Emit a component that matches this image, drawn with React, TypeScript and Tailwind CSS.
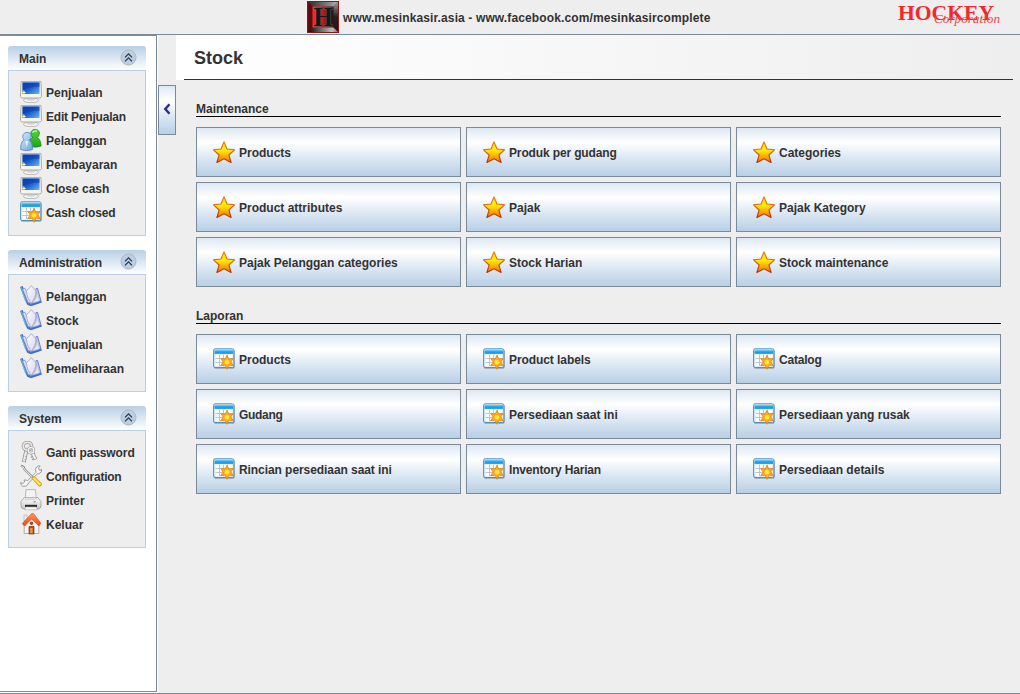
import type { ReactNode } from "react";

function MonitorIcon() {
  return (
    <svg width="22" height="22" viewBox="0 0 22 22">
      <defs>
        <linearGradient id="screen" x1="0" y1="0" x2="1" y2="1">
          <stop offset="0" stopColor="#0a3fae" />
          <stop offset=".45" stopColor="#1459cc" />
          <stop offset="1" stopColor="#6db4f5" />
        </linearGradient>
      </defs>
      <ellipse cx="11" cy="19.300" rx="7.600" ry="2.300" fill="#f6f6f6" stroke="#a9a9a9" strokeWidth=".8" />
      <path d="M7.500 16h7l1 3q-4.500 1.500-9 0z" fill="#d2d2d2" />
      <path d="M1 .6h20l.5 15-1.200 1.400H1.700L.5 15.600z" fill="#f4f4ee" stroke="#a3a69b" strokeWidth=".9" />
      <path d="M2.500 1.500h17V13h-17z" fill="url(#screen)" />
      <path d="M2.500 1.500h17V6q-9-1-17 3.500z" fill="#0a3ba4" opacity=".45" />
      <path d="m3.800 8.800.7 1.800 1.900.6-1.700.9-.5 1.900-1-1.700-1.700-.6 1.700-1z" fill="#fff0a0" />
    </svg>
  );
}

function UsersIcon() {
  return (
    <svg width="22" height="22" viewBox="0 0 22 22">
      <defs>
        <linearGradient id="userGreen" x2="0" y2="1">
          <stop offset="0" stopColor="#55d93b" />
          <stop offset="1" stopColor="#1da31a" />
        </linearGradient>
        <linearGradient id="userBlue" x2="1" y2="1">
          <stop offset="0" stopColor="#d7ecff" />
          <stop offset="1" stopColor="#6ba4dc" />
        </linearGradient>
      </defs>
      <path d="M9.500 17q-.5-7 3-8.500Q9.800 6 11 2.800 12.500 0 15.700.4q4 .8 3.700 4.300-.3 2.500-2.200 3.800 3.500 1.600 3.900 8.500-5.500 2.400-11.600 0z" fill="url(#userGreen)" stroke="#118016" strokeWidth=".7" />
      <path d="M12.500 3.500q1.500-2.400 4.400-1.200" stroke="#bdf5a9" strokeWidth="1.500" fill="none" />
      <path d="M.7 20.500q-.3-8 3.500-9.500Q1.700 8.500 3 5.700q1.700-2.900 5-2.300 3.600.8 3.100 4.400-.3 2-2.100 3.400 3.600 1.600 3.600 9.300-6 2.400-11.900 0z" fill="url(#userBlue)" stroke="#4b87c4" strokeWidth=".8" />
      <path d="m5.200 12 1.600 6.500 1.400-6.500z" fill="#fff" opacity=".75" />
    </svg>
  );
}

function TableIcon() {
  return (
    <svg width="22" height="22" viewBox="0 0 22 22">
      <defs>
        <linearGradient id="tableHead" x2="0" y2="1">
          <stop offset="0" stopColor="#7cd0f7" />
          <stop offset=".5" stopColor="#169be8" />
          <stop offset="1" stopColor="#2ea8ee" />
        </linearGradient>
      </defs>
      <rect x=".9" y="1.800" width="20.600" height="18.700" rx="1.500" fill="#75808a" />
      <rect x=".6" y=".8" width="20.300" height="18.700" rx="1.500" fill="#dcecf7" stroke="#4d93c2" />
      <path d="M1.500 2h18.600v4H1.500z" fill="url(#tableHead)" />
      <path d="M2.500 6.600h16.700v11.600H2.500z" fill="#fff" />
      <path d="M6.500 6.600v11.600M10.500 6.600v11.600M14.500 6.600v11.600M2.500 10.500h16.700M2.500 14.500h16.700" stroke="#b9bec4" strokeWidth=".9" />
      <path d="m14 7.300 1.800 3.800 4.300-.6-2.400 3.600 2.800 3.600-4.700-.6L14 21.300l-1.900-4.200-4.500.6 2.700-3.600-2.500-3.600 4.400.6z" fill="#ffad1d" stroke="#e8831b" strokeWidth=".9" />
      <circle cx="14" cy="14.200" r="2.300" fill="#ffe932" />
    </svg>
  );
}

function BookIcon() {
  return (
    <svg width="22" height="22" viewBox="0 0 22 22">
      <defs>
        <linearGradient id="page" x2="1" y2="1">
          <stop offset="0" stopColor="#fff" />
          <stop offset="1" stopColor="#d3d4ec" />
        </linearGradient>
      </defs>
      <path d="M.7 2 2.500 1.500 8 17l3 1.700 9.800-2.700.7 1.200-10.300 3.500-3.700-1.200z" fill="#3a7ed5" stroke="#2458b5" strokeWidth=".7" />
      <path d="M1 2.200 6 17" stroke="#4ab9f3" strokeWidth="1.500" strokeDasharray="2 1" />
      <path d="M2.600 4 5 3.200l6 15.300-3-1.200z" fill="#dedff0" stroke="#8b91be" strokeWidth=".7" />
      <path d="m16 3.700 1.500-.3L21 16l-9.800 3z" fill="#bdc9eb" stroke="#4a6dc2" strokeWidth=".8" />
      <path d="M11 18.600Q6.500 12 6.300 5.500q3-1.500 5-4.900Q13.500 3.600 16 5.400q0 8-5 13.200z" fill="url(#page)" stroke="#a0a2c8" strokeWidth=".8" />
      <path d="M17 5.500q.7 7-4.500 12.500l7-2z" fill="#e3e4f3" stroke="#a6a9cf" strokeWidth=".5" />
    </svg>
  );
}

function StarIcon() {
  return (
    <svg width="22" height="22" viewBox="0 0 22 22">
      <defs>
        <linearGradient id="starFill" x2="0" y2="1">
          <stop offset="0" stopColor="#ffd51a" />
          <stop offset=".4" stopColor="#fff000" />
          <stop offset="1" stopColor="#f36a08" />
        </linearGradient>
        <linearGradient id="starEdge" x2="0" y2="1">
          <stop offset="0" stopColor="#e9871e" />
          <stop offset="1" stopColor="#bd3005" />
        </linearGradient>
      </defs>
      <path d="m11 .7 3 7.300 7.500.8-5.600 5.200 2.200 7.500-7.100-3.700-7.100 3.700L6.100 14 .5 8.800 8 8z" fill="url(#starFill)" stroke="url(#starEdge)" strokeWidth="1.100" strokeLinejoin="round" />
    </svg>
  );
}

function KeysIcon() {
  return (
    <svg width="22" height="22" viewBox="0 0 22 22" fill="none">
      <path d="M6.300 9.500 3.800 21" stroke="#8a8a8a" strokeWidth="3.800" />
      <path d="M6.300 9.500 3.900 20.400" stroke="#e9e9e9" strokeWidth="2.400" />
      <ellipse cx="7.500" cy="5.300" rx="4.200" ry="3.900" stroke="#8f8f8f" strokeWidth="3.200" />
      <ellipse cx="7.500" cy="5.300" rx="4.200" ry="3.900" stroke="#e9e9e9" strokeWidth="1.900" />
      <path d="m12 11 3.500 7.500" stroke="#8a8a8a" strokeWidth="3.800" />
      <path d="m12 11 3.300 7" stroke="#f2f2f2" strokeWidth="2.300" />
      <circle cx="11" cy="9.300" r="2.800" stroke="#999" strokeWidth="2.600" />
      <circle cx="11" cy="9.300" r="2.800" stroke="#f3f3f3" strokeWidth="1.400" />
      <path d="m5.500 15.500 1.300.4M4.800 18.500l1.300.4m6.100-3.200-1.300.7m2.400 1.700-1.300.7" stroke="#999" strokeWidth="1.200" />
    </svg>
  );
}

function ToolsIcon() {
  return (
    <svg width="22" height="22" viewBox="0 0 22 22" fill="none">
      <path d="M2.500 21.200Q.6 20.200.6 17.500l2.300 1 1.700-1.500-.5-2Q6.500 14.500 7.300 16L16 7.300Q14.500 4.500 16.500 2q1.700-1.700 3.700-1L18.500 3l.5 1.900 2 .3 1-1.300Q22 8 18.800 8.800l-1.300-.1-9.100 9.600Q7.500 21.800 2.500 21.200z" fill="#f5f5f5" stroke="#888" strokeWidth=".8" />
      <path d="m1 .8 2.400 1L4.700 4.500l8.300 8.300" stroke="#777" strokeWidth="2.200" />
      <path d="m1.400 1.200 1.900 1L4.500 4.500l8 8" stroke="#e5e5e5" strokeWidth="1.100" />
      <path d="m12 13.300 2-2 7.500 7.300q.4 2.600-2.300 2.700z" fill="#ffda29" stroke="#c28b0b" strokeWidth=".8" />
      <path d="m13.500 13 6.600 6.600" stroke="#fff280" />
    </svg>
  );
}

function PrinterIcon() {
  return (
    <svg width="22" height="22" viewBox="0 0 22 22">
      <defs>
        <linearGradient id="printerBody" x2="0" y2="1">
          <stop offset="0" stopColor="#fff" />
          <stop offset="1" stopColor="#c8c8c8" />
        </linearGradient>
      </defs>
      <path d="M6 .7h9.500l.8 9.300H5.200z" fill="#f3f3f3" stroke="#aaa" strokeWidth=".8" />
      <path d="M4.300 8.500 1 12.500V17q0 2.500 3 3h14q3-.5 3-3v-4.500l-3.300-4z" fill="url(#printerBody)" stroke="#999" strokeWidth=".8" />
      <path d="M5 8.800h11.500l1 2.400H4z" fill="#dcdcdc" />
      <path d="M5 15.800h12v2.200H5z" fill="#2c2c2c" />
      <path d="M5.500 18h11l.7 2.800H4.800z" fill="#fafafa" stroke="#aaa" strokeWidth=".6" />
      <path d="M13.500 12.800h2.200" stroke="#50c83e" strokeWidth="1.200" />
    </svg>
  );
}

function HomeIcon() {
  return (
    <svg width="22" height="22" viewBox="0 0 22 22">
      <defs>
        <linearGradient id="roof" x2="0" y2="1">
          <stop offset="0" stopColor="#ff9658" />
          <stop offset="1" stopColor="#e9480f" />
        </linearGradient>
      </defs>
      <path d="M4 2h3v6H4z" fill="#eee" stroke="#aaa" strokeWidth=".6" />
      <path d="m4.200 10.500 7.300-7 7.300 7v10H4.200z" fill="#f6f4f0" stroke="#a89a90" strokeWidth=".8" />
      <path d="M11.500.7h2L20.700 10l-1.600 3-7.600-7-7 7-2.200-2.500z" fill="url(#roof)" stroke="#d0491a" strokeWidth=".7" />
      <circle cx="11.500" cy="10.200" r="1.700" fill="#954a2d" />
      <path d="M9 13.500h5V21H9z" fill="#b14b20" stroke="#7b3217" strokeWidth=".7" />
      <path d="M10.200 15h2.400v5.300h-2.400z" fill="#ef9a43" />
    </svg>
  );
}

function CollapseIcon() {
  return (
    <svg width="17" height="17" viewBox="0 0 17 17" fill="none">
      <circle cx="8.500" cy="8.500" r="7.500" fill="#b8cfe5" stroke="#b5b5b5" />
      <path d="m5 8.300 3.500-3.500L12 8.300M5 12.300l3.500-3.500 3.500 3.500" stroke="#2d3339" strokeWidth="1.150" />
    </svg>
  );
}

function HeaderLogo() {
  return (
    <svg width="32" height="32" viewBox="0 0 32 32">
      <defs>
        <linearGradient id="logoTop" x2="1" y2="0">
          <stop offset="0" stopColor="#2a2a2a" />
          <stop offset=".6" stopColor="#777" />
          <stop offset="1" stopColor="#b5b5b5" />
        </linearGradient>
        <linearGradient id="logoRight" x2="0" y2="1">
          <stop offset="0" stopColor="#9a9a9a" />
          <stop offset=".5" stopColor="#222" />
          <stop offset="1" stopColor="#2a1111" />
        </linearGradient>
        <linearGradient id="logoBottom" x2="1" y2="0">
          <stop offset="0" stopColor="#080808" />
          <stop offset=".8" stopColor="#bdbdbd" />
          <stop offset="1" stopColor="#777" />
        </linearGradient>
        <linearGradient id="logoInner" x2="1" y2="0">
          <stop offset="0" stopColor="#ff2a30" />
          <stop offset=".45" stopColor="#c9191f" />
          <stop offset="1" stopColor="#2a1012" />
        </linearGradient>
      </defs>
      <rect width="32" height="32" fill="#8e1518" />
      <path d="M1 1h30l-5 5H6z" fill="url(#logoTop)" />
      <path d="m31 1-5 5v20l5 5z" fill="url(#logoRight)" />
      <path d="M1 31h30l-5-5H6z" fill="url(#logoBottom)" />
      <path d="m1 1 5 5v20l-5 5z" fill="#5d0c0f" />
      <rect x="5.500" y="5.500" width="21" height="21" fill="url(#logoInner)" />
      <text x="16.200" y="24.800" textAnchor="middle" textLength="19" lengthAdjust="spacingAndGlyphs" className="fill-[#12181b] stroke-[#59605f] font-['Liberation_Serif',serif] text-[27px] font-bold [paint-order:stroke]" strokeWidth="1">H</text>
    </svg>
  );
}

function BrandLogo() {
  return (
    <svg width="110" height="28" viewBox="0 0 110 28">
      <text x="4" y="19.500" textLength="96" lengthAdjust="spacingAndGlyphs" className="fill-[#f5262c] font-['Liberation_Serif',serif] text-[21.500px] font-bold">HOCKEY</text>
      <text x="40" y="23" textLength="66" lengthAdjust="spacingAndGlyphs" className="fill-[#e8474c] font-['Liberation_Serif',serif] text-[12px] font-normal italic">Corporation</text>
    </svg>
  );
}

type Entry = { label: string; icon: ReactNode };

const mainItems: Entry[] = [
  { label: "Penjualan", icon: <MonitorIcon /> },
  { label: "Edit Penjualan", icon: <MonitorIcon /> },
  { label: "Pelanggan", icon: <UsersIcon /> },
  { label: "Pembayaran", icon: <MonitorIcon /> },
  { label: "Close cash", icon: <MonitorIcon /> },
  { label: "Cash closed", icon: <TableIcon /> },
];

const adminItems: Entry[] = ["Pelanggan", "Stock", "Penjualan", "Pemeliharaan"].map((label) => ({ label, icon: <BookIcon /> }));

const systemItems: Entry[] = [
  { label: "Ganti password", icon: <KeysIcon /> },
  { label: "Configuration", icon: <ToolsIcon /> },
  { label: "Printer", icon: <PrinterIcon /> },
  { label: "Keluar", icon: <HomeIcon /> },
];

const maintenance = ["Products", "Produk per gudang", "Categories", "Product attributes", "Pajak", "Pajak Kategory", "Pajak Pelanggan categories", "Stock Harian", "Stock maintenance"];
const reports = ["Products", "Product labels", "Catalog", "Gudang", "Persediaan saat ini", "Persediaan yang rusak", "Rincian persediaan saat ini", "Inventory Harian", "Persediaan details"];

const tracking: Record<string, string> = {
  "Edit Penjualan": "tracking-[-0.2px]",
  Administration: "tracking-[-0.12px]",
  Configuration: "tracking-[-0.25px]",
  "Ganti password": "tracking-[-0.1px]",
  "Cash closed": "tracking-[-0.1px]",
  "Produk per gudang": "tracking-[-0.14px]",
  "Rincian persediaan saat ini": "tracking-[-0.07px]",
  "Inventory Harian": "tracking-[-0.17px]",
  Catalog: "tracking-[-0.2px]",
  "Product labels": "tracking-[-0.08px]",
  Gudang: "tracking-[-0.3px]",
};

function Label({ children }: { children: string }) {
  return <span className={`pt-0.5 ${tracking[children] ?? "tracking-normal"}`}>{children}</span>;
}

function TaskPanel({ title, items }: { title: string; items: Entry[] }) {
  return (
    <section>
      <header className="flex h-[25px] items-center justify-between rounded-t-[3px] border-b border-[#b8cfe5] bg-linear-to-b from-[#b8cfe5] to-white pr-[9px] pb-px pl-[11px]">
        <h2 className="flex pt-px">
          <Label>{title}</Label>
        </h2>
        <CollapseIcon />
      </header>
      <ul className="border border-t-0 border-[#b8cfe5] bg-[#eeeeee] pt-[9px] pb-[11px] pl-[11px]">
        {items.map((item) => (
          <li key={item.label} className="flex h-6 items-center gap-1 whitespace-nowrap">
            {item.icon}
            <Label>{item.label}</Label>
          </li>
        ))}
      </ul>
    </section>
  );
}

function ButtonSection({ title, labels, icon }: { title: string; labels: string[]; icon: ReactNode }) {
  return (
    <section>
      <h2 className="h-[17px] border-b border-black pt-px leading-[17px]">{title}</h2>
      <div className="mt-2.5 grid grid-cols-3 gap-[5px]">
        {labels.map((label) => (
          <button key={label} className="flex h-[50px] items-center gap-1 border border-[#7a8a99] bg-[linear-gradient(to_bottom,#dde8f3_0%,#ffffff_30%,#dde8f3_62%,#b8cfe5_100%)] pl-4 whitespace-nowrap">
            {icon}
            <Label>{label}</Label>
          </button>
        ))}
      </div>
    </section>
  );
}

export default function App() {
  return (
    <div className="flex h-[694px] w-[1020px] flex-col overflow-hidden border-b border-[#7a8a99] bg-[#eeeeee] font-['Liberation_Sans',Arial,sans-serif] text-[12px] leading-[14px] font-bold text-[#333333]">
      <header className="grid h-[35px] shrink-0 grid-cols-[307px_1fr_110px_16px] border-b border-[#7a8a99]">
        <div />
        <div className="flex items-center gap-1">
          <HeaderLogo />
          <span className="pt-px tracking-[0.12px]">www.mesinkasir.asia - www.facebook.com/mesinkasircomplete</span>
        </div>
        <BrandLogo />
      </header>
      <div className="flex min-h-0 flex-1">
        <div className="w-[158px] shrink-0 bg-white pr-px pb-px">
          <aside className="flex h-full flex-col gap-3.5 border-t border-r border-b border-[#7a8a99] bg-white pt-2.5 pr-2.5 pl-2">
            <TaskPanel title="Main" items={mainItems} />
            <TaskPanel title="Administration" items={adminItems} />
            <TaskPanel title="System" items={systemItems} />
          </aside>
        </div>
        <div className="w-[18px] shrink-0 pt-[50px]">
          <button className="flex h-[50px] w-[18px] items-center justify-center border border-[#7a8a99] bg-[linear-gradient(to_bottom,#dde8f3_0%,#ffffff_30%,#dde8f3_62%,#b8cfe5_100%)] pb-0.5">
            <svg width="8" height="12" viewBox="0 0 8 12" fill="none">
              <path d="M6.500 1.200 2.300 6l4.200 4.800" stroke="#26358c" strokeWidth="2.500" />
            </svg>
          </button>
        </div>
        <main className="flex-1">
          <div className="h-[45px] bg-linear-to-r from-white to-[#eeeeee] pr-[7px] pl-2">
            <h1 className="h-full border-b border-[#333333] pl-2.5 text-[18px] leading-[46px]">Stock</h1>
          </div>
          <div className="flex flex-col gap-5 pt-5 pr-[19px] pl-5">
            <ButtonSection title="Maintenance" labels={maintenance} icon={<StarIcon />} />
            <ButtonSection title="Laporan" labels={reports} icon={<TableIcon />} />
          </div>
        </main>
      </div>
    </div>
  );
}
